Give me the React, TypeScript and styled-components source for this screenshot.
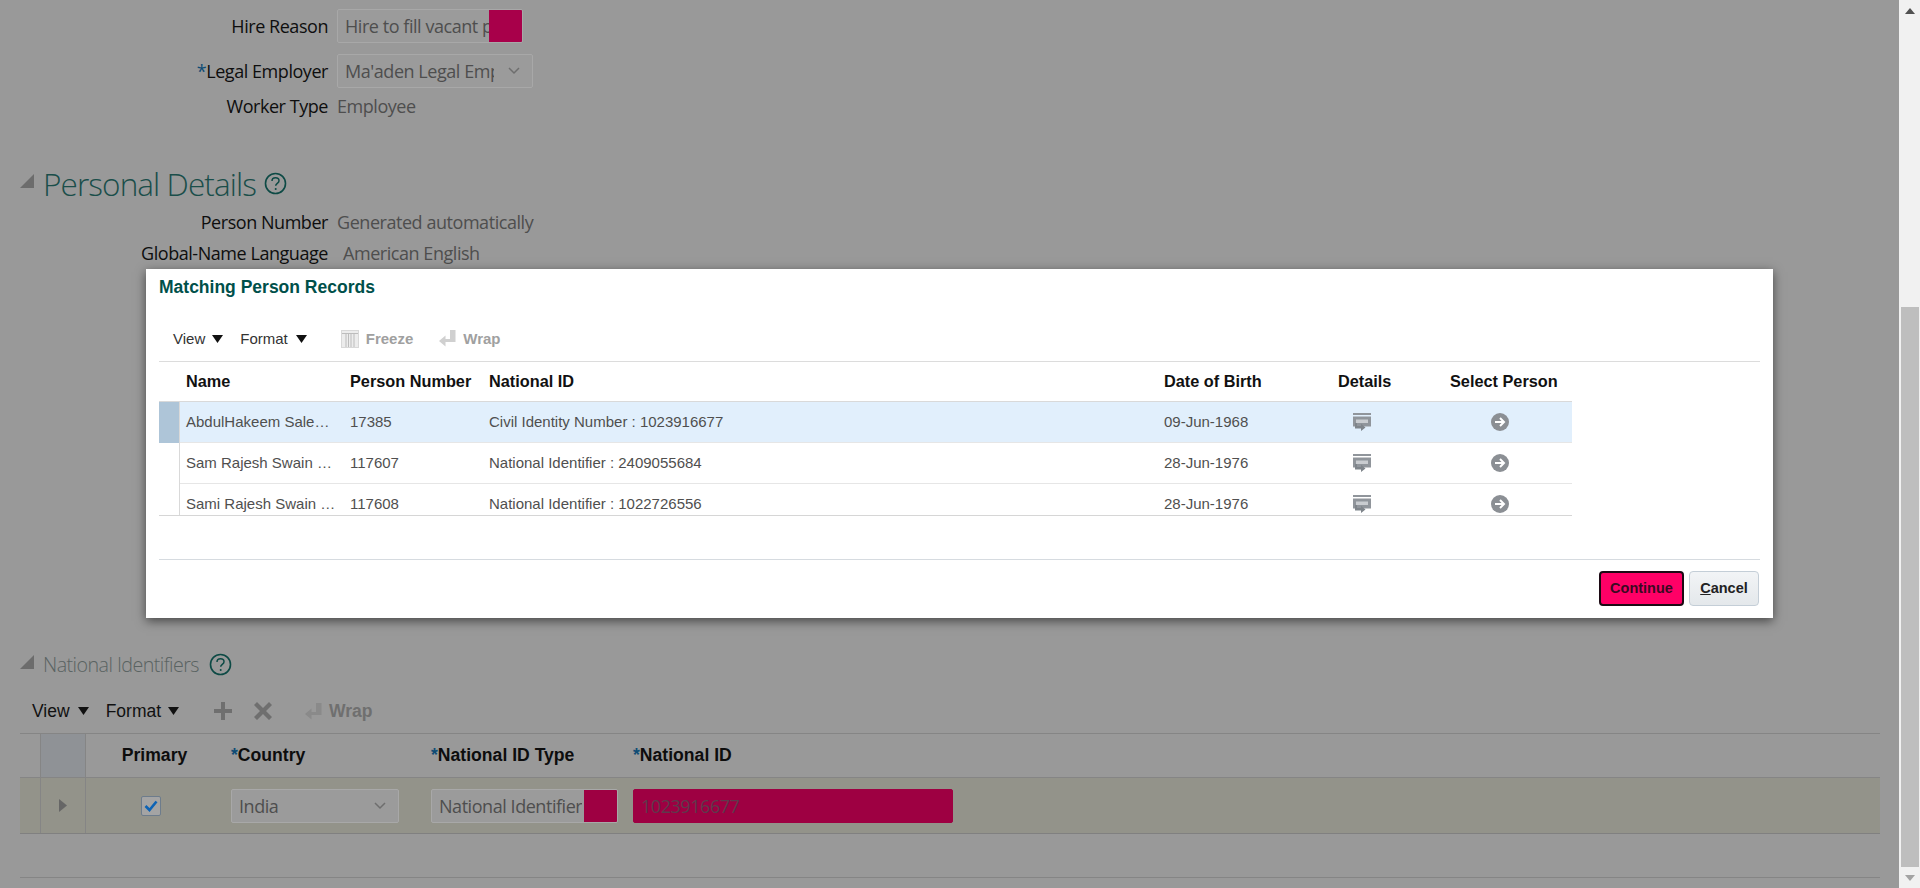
import React from "react";
import styled, { createGlobalStyle } from "styled-components";

const GlobalStyle = createGlobalStyle`
  html, body {
    margin: 0;
    padding: 0;
    height: 888px;
    overflow: hidden;
    background: #999999;
  }
  * {
    box-sizing: border-box;
  }
`;

const formFont = `"Open Sans", "Noto Sans", sans-serif`;
const gridFont = `"Liberation Sans", Arial, sans-serif`;

const Shell = styled.div`
  position: relative;
  display: flex;
  width: 1920px;
  height: 888px;
  overflow: hidden;
  background: #999999;
  font-family: ${formFont};
`;

const Content = styled.main`
  flex: 1;
  min-width: 0;
  padding: 9px 19px 0 20px;
`;

const Scrollbar = styled.div`
  display: flex;
  flex-direction: column;
  width: 21px;
  padding: 0 1px 0 2px;
  background: #f1f1f1;
`;

const ScrollTrack = styled.div`
  flex: 1;
  display: flex;
  padding-top: 286px;
`;

const ScrollThumb = styled.div`
  flex: 1;
  background: #bebebe;
`;

const ScrollArrow = styled.div`
  display: flex;
  align-items: center;
  justify-content: center;
  height: 21px;
`;

const FormRow = styled.div<{ $h: number; $mb?: number }>`
  display: flex;
  align-items: center;
  height: ${(p) => p.$h}px;
  margin-bottom: ${(p) => p.$mb ?? 0}px;
`;

const Label = styled.div`
  width: 308px;
  flex: none;
  text-align: right;
  font-size: 18px;
  color: #0e0e0e;
  letter-spacing: -0.45px;
  white-space: nowrap;
`;

const Star = styled.span`
  color: #0f4c75;
`;

const Value = styled.div<{ $ml?: number }>`
  margin-left: ${(p) => p.$ml ?? 9}px;
  font-size: 18px;
  color: #4e4e4e;
  letter-spacing: -0.45px;
  white-space: nowrap;
`;

const Field = styled.div<{ $w: number; $left?: number; $redacted?: boolean }>`
  position: relative;
  display: flex;
  align-items: center;
  justify-content: space-between;
  width: ${(p) => p.$w}px;
  height: 34px;
  margin-left: ${(p) => p.$left ?? 0}px;
  padding: 0 12px 0 7px;
  border: 1px solid ${(p) => (p.$redacted ? "#9e0042" : "#a8a8a8")};
  border-radius: 2px;
  background: ${(p) => (p.$redacted ? "#9e0042" : "#9b9b9b")};
  font-family: ${formFont};
  font-size: 18px;
  font-weight: 400;
  letter-spacing: -0.45px;
  color: ${(p) => (p.$redacted ? "#5e3a4c" : "#4e4e4e")};
  overflow: hidden;
  white-space: nowrap;
`;

const FieldText = styled.span<{ $w?: number }>`
  display: block;
  overflow: hidden;
  width: ${(p) => (p.$w ? `${p.$w}px` : "auto")};
`;

const Redaction = styled.div<{ $w: number; $color: string }>`
  position: absolute;
  top: 0;
  right: 0;
  bottom: 0;
  width: ${(p) => p.$w}px;
  background: ${(p) => p.$color};
`;

const Section = styled.div<{ $mt: number; $h: number }>`
  display: flex;
  align-items: center;
  height: ${(p) => p.$h}px;
  margin-top: ${(p) => p.$mt}px;
`;

const Disclosure = styled.svg`
  flex: none;
  width: 14px;
  height: 14px;
  margin: 0 9px 4px 0;
`;

const Heading = styled.h2<{ $size: number; $color: string }>`
  margin: 0;
  font-family: ${formFont};
  font-weight: 300;
  font-size: ${(p) => p.$size}px;
  letter-spacing: ${(p) => (p.$size > 24 ? -0.9 : -0.55)}px;
  color: ${(p) => p.$color};
  white-space: nowrap;
`;

const HelpIcon = styled.svg<{ $ml: number }>`
  flex: none;
  width: 23px;
  height: 23px;
  margin-left: ${(p) => p.$ml}px;
`;

const PageToolbar = styled.div`
  display: flex;
  align-items: center;
  height: 44px;
  margin-top: 7px;
  padding-left: 12px;
  font-family: ${gridFont};
  font-size: 17.5px;
  color: #111111;
`;

const ToolLabel = styled.span<{ $ml?: number; $tone?: string; $bold?: boolean }>`
  margin-left: ${(p) => p.$ml ?? 0}px;
  font-weight: ${(p) => (p.$bold ? 700 : 400)};
  color: ${(p) => p.$tone ?? "inherit"};
  white-space: nowrap;
`;

const Caret = styled.svg<{ $ml: number }>`
  flex: none;
  width: 11px;
  height: 8px;
  margin-left: ${(p) => p.$ml}px;
`;

const ToolIcon = styled.svg<{ $ml: number; $size: number }>`
  flex: none;
  width: ${(p) => p.$size}px;
  height: ${(p) => p.$size}px;
  margin-left: ${(p) => p.$ml}px;
`;

const PageTable = styled.div`
  border-top: 1px solid #858585;
  font-family: ${gridFont};
`;

const pageColumns = "20px 46px 145px 200px 202px 1fr";

const PageHeadRow = styled.div`
  display: grid;
  grid-template-columns: ${pageColumns};
  height: 44px;
  align-items: center;
  border-bottom: 1px solid #858585;
  font-size: 17.6px;
  font-weight: 700;
  color: #0d0d0d;
`;

const PageBodyRow = styled.div`
  display: grid;
  grid-template-columns: ${pageColumns};
  height: 56px;
  align-items: center;
  border-bottom: 1px solid #808080;
  background: #93938a;
`;

const Spacer = styled.div``;

const RowHeadCell = styled.div<{ $dark?: boolean }>`
  display: flex;
  align-items: center;
  justify-content: center;
  height: 100%;
  border-left: 1px solid #858585;
  border-right: 1px solid #858585;
  background: ${(p) => (p.$dark ? "#8f9296" : "transparent")};
`;

const HeadCell = styled.div<{ $center?: boolean }>`
  padding-right: ${(p) => (p.$center ? 8 : 0)}px;
  text-align: ${(p) => (p.$center ? "center" : "left")};
  white-space: nowrap;
`;

const Cell = styled.div<{ $center?: boolean }>`
  display: flex;
  justify-content: ${(p) => (p.$center ? "center" : "flex-start")};
  padding-right: ${(p) => (p.$center ? 16 : 0)}px;
`;

const Checkbox = styled.div`
  display: flex;
  align-items: center;
  justify-content: center;
  width: 20px;
  height: 20px;
  border: 1px solid #6d7c8c;
  border-radius: 2px;
  background: #a4a4a4;
`;

const PageRule = styled.div`
  height: 1px;
  margin-top: 43px;
  background: #858585;
`;

const Modal = styled.section`
  position: absolute;
  left: 146px;
  top: 269px;
  width: 1627px;
  height: 349px;
  padding: 0 13px;
  background: #ffffff;
  box-shadow: 0 3px 10px rgba(0, 0, 0, 0.55);
  font-family: ${gridFont};
`;

const ModalTitle = styled.h1`
  margin: 0;
  height: 36px;
  padding: 8px 0 0 0;
  font-size: 17.5px;
  line-height: 20px;
  font-weight: 700;
  color: #00504a;
`;

const ModalToolbar = styled.div`
  display: flex;
  align-items: center;
  height: 56px;
  padding: 11px 0 0 14px;
  font-size: 15px;
  color: #333333;
`;

const Grid = styled.div`
  border-top: 1px solid #dcdcdc;
`;

const columns = "21px 163px 139px 675px 174px 112px 129px";

const GridInner = styled.div`
  width: 1413px;
  height: 154px;
  overflow: hidden;
  border-bottom: 1px solid #d6d6d6;
`;

const GridHead = styled.div`
  display: grid;
  grid-template-columns: ${columns};
  align-items: center;
  height: 40px;
  border-bottom: 1px solid #d9d9d9;
  font-size: 16.3px;
  font-weight: 700;
  color: #111111;
`;

const GridRow = styled.div<{ $selected?: boolean }>`
  display: grid;
  grid-template-columns: ${columns};
  align-items: center;
  height: 41px;
  border-bottom: 1px solid #e6e6e6;
  background: ${(p) => (p.$selected ? "#e1effc" : "#ffffff")};
  font-size: 15px;
  color: #4f4f4f;
`;

const Selector = styled.div<{ $selected?: boolean }>`
  align-self: stretch;
  margin-bottom: -1px;
  border-right: 1px solid #d9d9d9;
  background: ${(p) => (p.$selected ? "#aec5d8" : "#ffffff")};
`;

const GridCell = styled.div<{ $left?: number }>`
  padding: 0 0 1px ${(p) => p.$left ?? 7}px;
  white-space: nowrap;
`;

const Truncated = styled.div`
  width: 159px;
  padding: 0 0 1px 6px;
  overflow: hidden;
  text-overflow: ellipsis;
  white-space: nowrap;
`;

const IconCell = styled.div<{ $left: number }>`
  display: flex;
  padding-left: ${(p) => p.$left}px;
`;

const Footer = styled.footer`
  display: flex;
  justify-content: flex-end;
  gap: 5px;
  margin-top: 43px;
  padding: 11px 1px 0 0;
  border-top: 1px solid #d6dbe0;
`;

const Button = styled.button<{ $primary?: boolean }>`
  height: 35px;
  padding: 0 0 1px;
  width: ${(p) => (p.$primary ? 85 : 70)}px;
  border: ${(p) => (p.$primary ? "2px solid #1c0a14" : "1px solid #c4ced7")};
  border-radius: 4px;
  background: ${(p) =>
    p.$primary ? "#ff0066" : "linear-gradient(#f2f4f6, #e4e8eb)"};
  font-family: ${gridFont};
  font-size: 14.5px;
  font-weight: 700;
  color: ${(p) => (p.$primary ? "#3a0a22" : "#222222")};
`;

const DownCaret = ({ ml }: { ml: number }) => (
  <Caret $ml={ml} viewBox="0 0 11 8">
    <path d="M0 0H11L5.5 8Z" fill="#111111" />
  </Caret>
);

const Triangle = () => (
  <Disclosure viewBox="0 0 14 14">
    <path d="M14 0V14H0Z" fill="#6c6c6c" />
  </Disclosure>
);

const Help = ({ ml }: { ml: number }) => (
  <HelpIcon $ml={ml} viewBox="0 0 23 23">
    <circle cx="11.5" cy="11.5" r="10" fill="none" stroke="#0d4a45" strokeWidth="1.6" />
    <path
      d="M8 9c0-2 1.5-3.2 3.5-3.2s3.5 1.2 3.5 3c0 2.6-3.3 2.6-3.3 5"
      fill="none"
      stroke="#0d4a45"
      strokeWidth="1.5"
    />
    <circle cx="11.7" cy="17" r="1" fill="#0d4a45" />
  </HelpIcon>
);

const WrapGlyph = ({ ml, fill }: { ml: number; fill: string }) => (
  <ToolIcon $ml={ml} $size={17} viewBox="0 0 17 17">
    <path d="M11 0h5.5v12H6.5v4.5L0 11 6.5 5.5V9H11Z" fill={fill} />
  </ToolIcon>
);

const FreezeGlyph = ({ ml }: { ml: number }) => (
  <ToolIcon $ml={ml} $size={18} viewBox="0 0 18 18">
    <rect x="0.5" y="0.5" width="17" height="17" fill="#ececec" stroke="#d8d8d8" />
    <path d="M1 3.5h16M5 4v13M7.5 4v13M10 4v13M13 4v13" stroke="#bcbcbc" strokeWidth="1" />
  </ToolIcon>
);

const DetailsGlyph = () => (
  <svg width="18" height="18" viewBox="0 0 18 18">
    <path d="M0 0h18v2H0Z" fill="#90959b" />
    <path d="M0 3.5h18V13.5H0Z" fill="#90959b" />
    <path d="M3 6.5h12V10H3Z" fill="#c9ccd0" />
    <path d="M2 10h2v3h4v-2.2l4.5 3.6L8 18v-2.5H2Z" fill="#7f858b" />
  </svg>
);

const GoGlyph = () => (
  <svg width="18" height="18" viewBox="0 0 18 18">
    <circle cx="9" cy="9" r="9" fill="#8b8f94" />
    <path d="M4 9h8M9 5l4 4-4 4" fill="none" stroke="#ffffff" strokeWidth="2" />
  </svg>
);

const Chevron = () => (
  <svg width="12" height="8" viewBox="0 0 12 8">
    <path d="M1 1l5 5 5-5" fill="none" stroke="#6e6e6e" strokeWidth="1.5" />
  </svg>
);

const people = [
  { name: "AbdulHakeem Salem Alghamdi", no: "17385", id: "Civil Identity Number : 1023916677", dob: "09-Jun-1968" },
  { name: "Sam Rajesh Swain Kumar", no: "117607", id: "National Identifier : 2409055684", dob: "28-Jun-1976" },
  { name: "Sami Rajesh Swain Kumar", no: "117608", id: "National Identifier : 1022726556", dob: "28-Jun-1976" },
];

export default function App(): React.ReactElement {
  return (
    <>
      <GlobalStyle />
      <Shell>
        <Content>
          <FormRow $h={34} $mb={11}>
            <Label>Hire Reason</Label>
            <Field $w={186} $left={9}>
              <FieldText>Hire to fill vacant position</FieldText>
              <Redaction $w={33} $color="#a8004a" />
            </Field>
          </FormRow>
          <FormRow $h={34}>
            <Label>
              <Star>*</Star>Legal Employer
            </Label>
            <Field $w={196} $left={9}>
              <FieldText $w={149}>Ma'aden Legal Employer</FieldText>
              <Chevron />
            </Field>
          </FormRow>
          <FormRow $h={36}>
            <Label>Worker Type</Label>
            <Value>Employee</Value>
          </FormRow>

          <Section $mt={35} $h={48}>
            <Triangle />
            <Heading $size={31.5} $color="#1a4e4a">Personal Details</Heading>
            <Help ml={8} />
          </Section>

          <FormRow $h={30} $mb={1}>
            <Label>Person Number</Label>
            <Value>Generated automatically</Value>
          </FormRow>
          <FormRow $h={30}>
            <Label>Global-Name Language</Label>
            <Value $ml={15}>American English</Value>
          </FormRow>

          <Section $mt={378} $h={36}>
            <Triangle />
            <Heading $size={19.7} $color="#5a6362">National Identifiers</Heading>
            <Help ml={10} />
          </Section>

          <PageToolbar>
            <ToolLabel>View</ToolLabel>
            <DownCaret ml={8} />
            <ToolLabel $ml={17}>Format</ToolLabel>
            <DownCaret ml={7} />
            <ToolIcon $ml={35} $size={18} viewBox="0 0 18 18">
              <path d="M7 0h4v7h7v4h-7v7H7v-7H0V7h7Z" fill="#6f6f6f" />
            </ToolIcon>
            <ToolIcon $ml={22} $size={18} viewBox="0 0 18 18">
              <path d="M3 0l6 6 6-6 3 3-6 6 6 6-3 3-6-6-6 6-3-3 6-6-6-6Z" fill="#6f6f6f" />
            </ToolIcon>
            <WrapGlyph ml={33} fill="#8a8a8a" />
            <ToolLabel $ml={7} $tone="#6f6f6f" $bold>Wrap</ToolLabel>
          </PageToolbar>

          <PageTable>
            <PageHeadRow>
              <Spacer />
              <RowHeadCell $dark />
              <HeadCell $center>Primary</HeadCell>
              <HeadCell><Star>*</Star>Country</HeadCell>
              <HeadCell><Star>*</Star>National ID Type</HeadCell>
              <HeadCell><Star>*</Star>National ID</HeadCell>
            </PageHeadRow>
            <PageBodyRow>
              <Spacer />
              <RowHeadCell>
                <svg width="8" height="13" viewBox="0 0 8 13">
                  <path d="M0 0l8 6.5L0 13Z" fill="#666666" />
                </svg>
              </RowHeadCell>
              <Cell $center>
                <Checkbox>
                  <svg width="14" height="12" viewBox="0 0 14 12">
                    <path d="M1.5 6l4 4 7-8.5" fill="none" stroke="#0d63b5" strokeWidth="2.6" />
                  </svg>
                </Checkbox>
              </Cell>
              <Cell>
                <Field $w={168}>
                  India
                  <Chevron />
                </Field>
              </Cell>
              <Cell>
                <Field $w={187}>
                  <FieldText>National Identifier</FieldText>
                  <Redaction $w={33} $color="#9e0042" />
                </Field>
              </Cell>
              <Cell>
                <Field $w={320} $redacted>
                  <FieldText>1023916677</FieldText>
                </Field>
              </Cell>
            </PageBodyRow>
            <PageRule />
          </PageTable>
        </Content>

        <Scrollbar>
          <ScrollArrow>
            <svg width="10" height="6" viewBox="0 0 10 6">
              <path d="M0 6h10L5 0Z" fill="#505050" />
            </svg>
          </ScrollArrow>
          <ScrollTrack>
            <ScrollThumb />
          </ScrollTrack>
          <ScrollArrow>
            <svg width="10" height="6" viewBox="0 0 10 6">
              <path d="M0 0h10L5 6Z" fill="#a3a3a3" />
            </svg>
          </ScrollArrow>
        </Scrollbar>

        <Modal>
          <ModalTitle>Matching Person Records</ModalTitle>
          <ModalToolbar>
            <ToolLabel>View</ToolLabel>
            <DownCaret ml={7} />
            <ToolLabel $ml={17}>Format</ToolLabel>
            <DownCaret ml={8} />
            <FreezeGlyph ml={34} />
            <ToolLabel $ml={7} $tone="#a0a0a0" $bold>Freeze</ToolLabel>
            <WrapGlyph ml={26} fill="#d0d0d0" />
            <ToolLabel $ml={7} $tone="#a0a0a0" $bold>Wrap</ToolLabel>
          </ModalToolbar>
          <Grid>
            <GridInner>
              <GridHead>
                <Spacer />
                <GridCell $left={6}>Name</GridCell>
                <GridCell>Person Number</GridCell>
                <GridCell>National ID</GridCell>
                <GridCell>Date of Birth</GridCell>
                <GridCell>Details</GridCell>
                <GridCell>Select Person</GridCell>
              </GridHead>
              {people.map((p, i) => (
                <GridRow key={p.no} $selected={i === 0}>
                  <Selector $selected={i === 0} />
                  <Truncated>{p.name}</Truncated>
                  <GridCell>{p.no}</GridCell>
                  <GridCell>{p.id}</GridCell>
                  <GridCell>{p.dob}</GridCell>
                  <IconCell $left={22}><DetailsGlyph /></IconCell>
                  <IconCell $left={48}><GoGlyph /></IconCell>
                </GridRow>
              ))}
            </GridInner>
          </Grid>
          <Footer>
            <Button $primary>Continue</Button>
            <Button><u>C</u>ancel</Button>
          </Footer>
        </Modal>
      </Shell>
    </>
  );
}
